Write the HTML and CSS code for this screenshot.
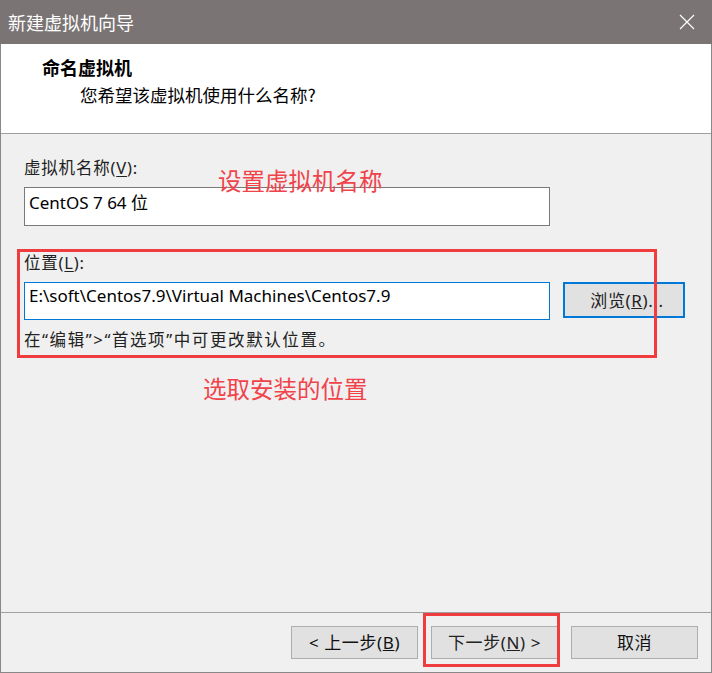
FILE: index.html
```html
<!DOCTYPE html>
<html lang="zh-CN">
<head>
  <meta charset="UTF-8">
  <title>新建虚拟机向导</title>
  <link rel="stylesheet" href="styles.css">
</head>
<body>
  <div class="window">
    <!-- Title bar -->
    <div class="titlebar">
      <span class="title">新建虚拟机向导</span>
      <svg class="close" width="16" height="16" viewBox="0 0 16 16">
        <path d="M1 1 L15 15 M15 1 L1 15" stroke="#fff" stroke-width="1.2" fill="none"/>
      </svg>
    </div>

    <!-- Header -->
    <div class="header">
      <div class="header-title">命名虚拟机</div>
      <div class="header-sub">您希望该虚拟机使用什么名称?</div>
    </div>

    <!-- Content -->
    <div class="content">
      <div class="field">
        <label class="label">虚拟机名称(<u>V</u>):</label>
        <div class="textbox name-box">CentOS 7 64 位</div>
      </div>

      <div class="field location">
        <label class="label">位置(<u>L</u>):</label>
        <div class="row">
          <div class="textbox path-box">E:\soft\Centos7.9\Virtual Machines\Centos7.9</div>
          <button class="btn browse">浏览(<u>R</u>)...</button>
        </div>
        <p class="hint">在“编辑”&gt;“首选项”中可更改默认位置。</p>
      </div>

      <!-- annotations -->
      <div class="mark mark-location"></div>
      <span class="note note-name">设置虚拟机名称</span>
      <span class="note note-location">选取安装的位置</span>
    </div>

    <!-- Footer -->
    <div class="footer">
      <button class="btn">&lt; 上一步(<u>B</u>)</button>
      <button class="btn next">下一步(<u>N</u>) &gt;</button>
      <button class="btn">取消</button>
      <div class="mark mark-next"></div>
    </div>
  </div>
</body>
</html>
```

FILE: styles.css
```css
* {
  box-sizing: border-box;
  margin: 0;
  padding: 0;
}

body {
  font-family: "Noto Sans", "Noto Sans CJK SC", sans-serif;
  font-size: 16px;
  color: #000;
  background: #f0f0f0;
}

.window {
  width: 712px;
  height: 673px;
  display: flex;
  flex-direction: column;
  border: 1px solid #888;
  border-top: none;
  background: #f0f0f0;
}

.titlebar {
  height: 44px;
  background: #7a7574;
  color: #fff;
  display: flex;
  align-items: center;
  justify-content: space-between;
  padding: 0 17px 0 8px;
  margin: 0 -1px;
}

.title {
  font-family: "Noto Sans CJK SC", sans-serif;
  font-size: 18px;
  line-height: 1;
}

.close {
  display: block;
}

.header {
  height: 90px;
  background: #fff;
  border-bottom: 1px solid #a0a0a0;
  padding: 10px 0 0 41px;
  font-family: "Noto Sans CJK SC", serif;
}

.header-title {
  font-size: 18px;
  font-weight: bold;
  line-height: 26px;
}

.header-sub {
  font-size: 17.5px;
  line-height: 26px;
  padding-left: 38px;
  margin-top: 2px;
}

.content {
  flex: 1;
  position: relative;
  padding: 22px 0 0 23px;
}

.label {
  display: block;
  line-height: 24px;
  color: #222;
  font-size: 16.5px;
  letter-spacing: 0.8px;
}

.label u {
  text-underline-offset: 2px;
}

.textbox {
  background: #fff;
  border: 1px solid #7a7a7a;
  font-size: 17px;
  padding: 3px 4px;
  line-height: 24px;
}

.name-box {
  width: 526px;
  height: 39px;
  margin-top: 7px;
}

.location {
  margin-top: 25px;
}

.row {
  display: flex;
  align-items: flex-start;
  gap: 13px;
  margin-top: 7px;
}

.path-box {
  width: 526px;
  height: 38px;
  border-color: #0078d7;
  padding-top: 1px;
}

.hint {
  margin-top: 8px;
  line-height: 24px;
  color: #222;
  font-size: 16.5px;
  letter-spacing: 1.6px;
}

.btn {
  font-family: "Noto Sans", "Noto Sans CJK SC", sans-serif;
  font-size: 17px;
  letter-spacing: 0.6px;
  background: #e1e1e1;
  border: 1px solid #adadad;
  color: #111;
  width: 127px;
  height: 33px;
  line-height: 1;
}

.browse {
  width: 122px;
  height: 36px;
  border: 2px solid #0078d7;
  color: #222;
  padding-left: 6px;
}

.footer {
  position: relative;
  height: 60px;
  border-top: 1px solid #a0a0a0;
  display: flex;
  justify-content: flex-end;
  gap: 13px;
  padding: 13px 13px 0 0;
}

.next {
  color: #222;
}

/* red annotation boxes and notes */
.mark {
  position: absolute;
  border: 3px solid #ee3c3f;
}

.mark-location {
  left: 16px;
  top: 115px;
  width: 640px;
  height: 109px;
}

.mark-next {
  left: 422px;
  top: 0;
  width: 137px;
  height: 54px;
}

.note {
  position: absolute;
  font-family: "Noto Sans CJK SC", sans-serif;
  font-size: 23.5px;
  line-height: 1;
  color: #f0434a;
}

.note-name {
  left: 217px;
  top: 35px;
}

.note-location {
  left: 202px;
  top: 243px;
}
```
